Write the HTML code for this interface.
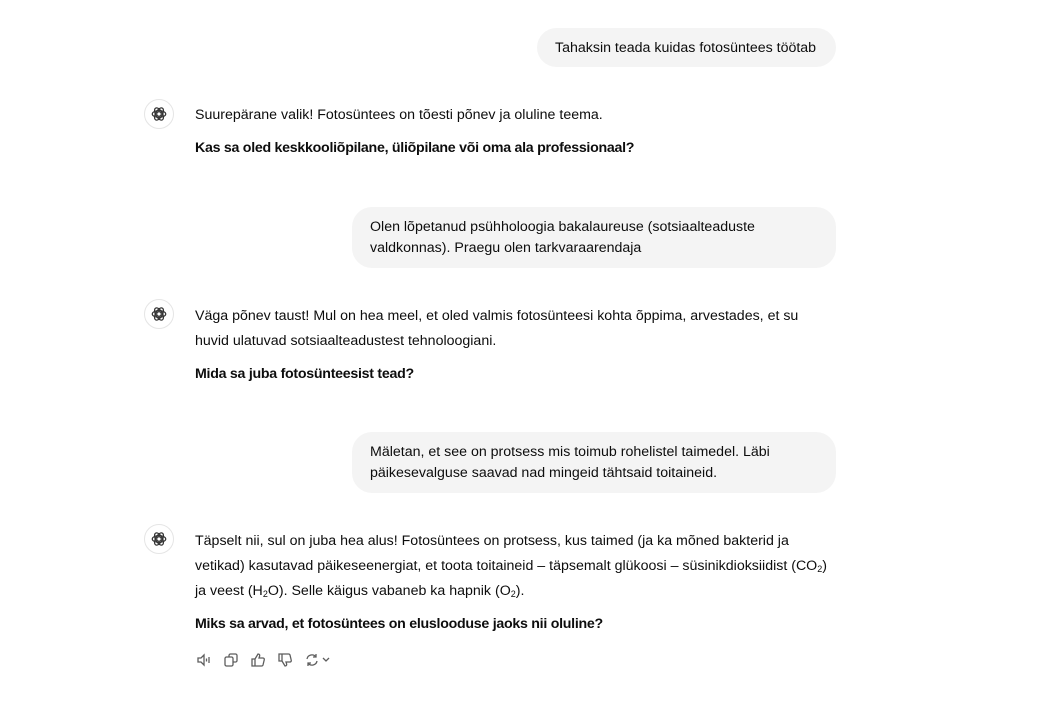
<!DOCTYPE html><html><head><style>
body{margin:0;background:#fff;font-family:"Liberation Sans",sans-serif;font-size:14.2px;color:#0d0d0d;width:1044px;height:717px;position:relative;overflow:hidden}
.u{position:absolute;right:208px;background:#f4f4f4;border-radius:20px;padding:10px 18px;line-height:21px;box-sizing:border-box}
.a{position:absolute;left:195px;width:660px;line-height:25px;white-space:nowrap}
.a p{margin:0 0 8px}
.av{position:absolute;left:144px;width:30px;height:30px;border:1px solid #e5e5e5;border-radius:50%;box-sizing:border-box;display:flex;align-items:center;justify-content:center}
b{font-weight:bold;letter-spacing:-0.27px}
sub{font-size:9px;vertical-align:-2px;line-height:0}
.ic{position:absolute;top:652px;display:flex;gap:11px;left:196px}
</style></head><body>
<div class="u" style="top:28px;height:39px;left:537px;">Tahaksin teada kuidas fotosüntees töötab</div>
<div class="av" style="top:99px"><svg width="18" height="18" viewBox="0 0 24 24" fill="none" stroke="#333" stroke-width="1.6"><circle cx="12" cy="12" r="3"/><ellipse cx="12" cy="12" rx="9" ry="4.5"/><ellipse cx="12" cy="12" rx="9" ry="4.5" transform="rotate(60 12 12)"/><ellipse cx="12" cy="12" rx="9" ry="4.5" transform="rotate(120 12 12)"/></svg></div>
<div class="a" style="top:103px"><p>Suurepärane valik! Fotosüntees on tõesti põnev ja oluline teema.</p><p><b>Kas sa oled keskkooliõpilane, üliõpilane või oma ala professionaal?</b></p></div>
<div class="u" style="top:207px;height:61px;left:352px;">Olen lõpetanud psühholoogia bakalaureuse (sotsiaalteaduste valdkonnas). Praegu olen tarkvaraarendaja</div>
<div class="av" style="top:299px"><svg width="18" height="18" viewBox="0 0 24 24" fill="none" stroke="#333" stroke-width="1.6"><circle cx="12" cy="12" r="3"/><ellipse cx="12" cy="12" rx="9" ry="4.5"/><ellipse cx="12" cy="12" rx="9" ry="4.5" transform="rotate(60 12 12)"/><ellipse cx="12" cy="12" rx="9" ry="4.5" transform="rotate(120 12 12)"/></svg></div>
<div class="a" style="top:304px"><p>Väga põnev taust! Mul on hea meel, et oled valmis fotosünteesi kohta õppima, arvestades, et su<br>huvid ulatuvad sotsiaalteadustest tehnoloogiani.</p><p><b>Mida sa juba fotosünteesist tead?</b></p></div>
<div class="u" style="top:432px;height:61px;left:352px;">Mäletan, et see on protsess mis toimub rohelistel taimedel. Läbi päikesevalguse saavad nad mingeid tähtsaid toitaineid.</div>
<div class="av" style="top:524px"><svg width="18" height="18" viewBox="0 0 24 24" fill="none" stroke="#333" stroke-width="1.6"><circle cx="12" cy="12" r="3"/><ellipse cx="12" cy="12" rx="9" ry="4.5"/><ellipse cx="12" cy="12" rx="9" ry="4.5" transform="rotate(60 12 12)"/><ellipse cx="12" cy="12" rx="9" ry="4.5" transform="rotate(120 12 12)"/></svg></div>
<div class="a" style="top:529px"><p>Täpselt nii, sul on juba hea alus! Fotosüntees on protsess, kus taimed (ja ka mõned bakterid ja<br>vetikad) kasutavad päikeseenergiat, et toota toitaineid – täpsemalt glükoosi – süsinikdioksiidist (CO<sub>2</sub>)<br>ja veest (H<sub>2</sub>O). Selle käigus vabaneb ka hapnik (O<sub>2</sub>).</p><p><b>Miks sa arvad, et fotosüntees on eluslooduse jaoks nii oluline?</b></p></div>
<div class="ic">
<svg width="16" height="16" viewBox="0 0 16 16" fill="none" stroke="#5d5d5d" stroke-width="1.3"><path d="M2 6h3l3-3v10l-3-3H2z"/><path d="M10.5 6.5v3M13 5v6"/></svg>
<svg width="16" height="16" viewBox="0 0 16 16" fill="none" stroke="#5d5d5d" stroke-width="1.3"><rect x="2" y="5" width="8" height="9" rx="1.5"/><path d="M6 5V3.5A1.5 1.5 0 0 1 7.5 2h5A1.5 1.5 0 0 1 14 3.5v5a1.5 1.5 0 0 1-1.5 1.5H10"/></svg>
<svg width="16" height="16" viewBox="0 0 16 16" fill="none" stroke="#5d5d5d" stroke-width="1.3"><path d="M2 7h3v7H2zM5 7l3-5c1.5 0 2 1 1.5 2.5L9 6h4c1 0 1.5 1 1.2 2l-1.2 5c-.2.7-.8 1-1.5 1H5"/></svg>
<svg width="16" height="16" viewBox="0 0 16 16" fill="none" stroke="#5d5d5d" stroke-width="1.3"><path d="M2 2h3v7H2zM5 9l3 5c1.5 0 2-1 1.5-2.5L9 10h4c1 0 1.5-1 1.2-2L13 3c-.2-.7-.8-1-1.5-1H5"/></svg>
<svg width="28" height="16" viewBox="0 0 28 16" fill="none" stroke="#5d5d5d" stroke-width="1.3"><path d="M3 7a5 5 0 0 1 9-2M13 9a5 5 0 0 1-9 2M12 2v3H9M4 14v-3h3M19 6l3 3 3-3"/></svg>
</div>
</body></html>
